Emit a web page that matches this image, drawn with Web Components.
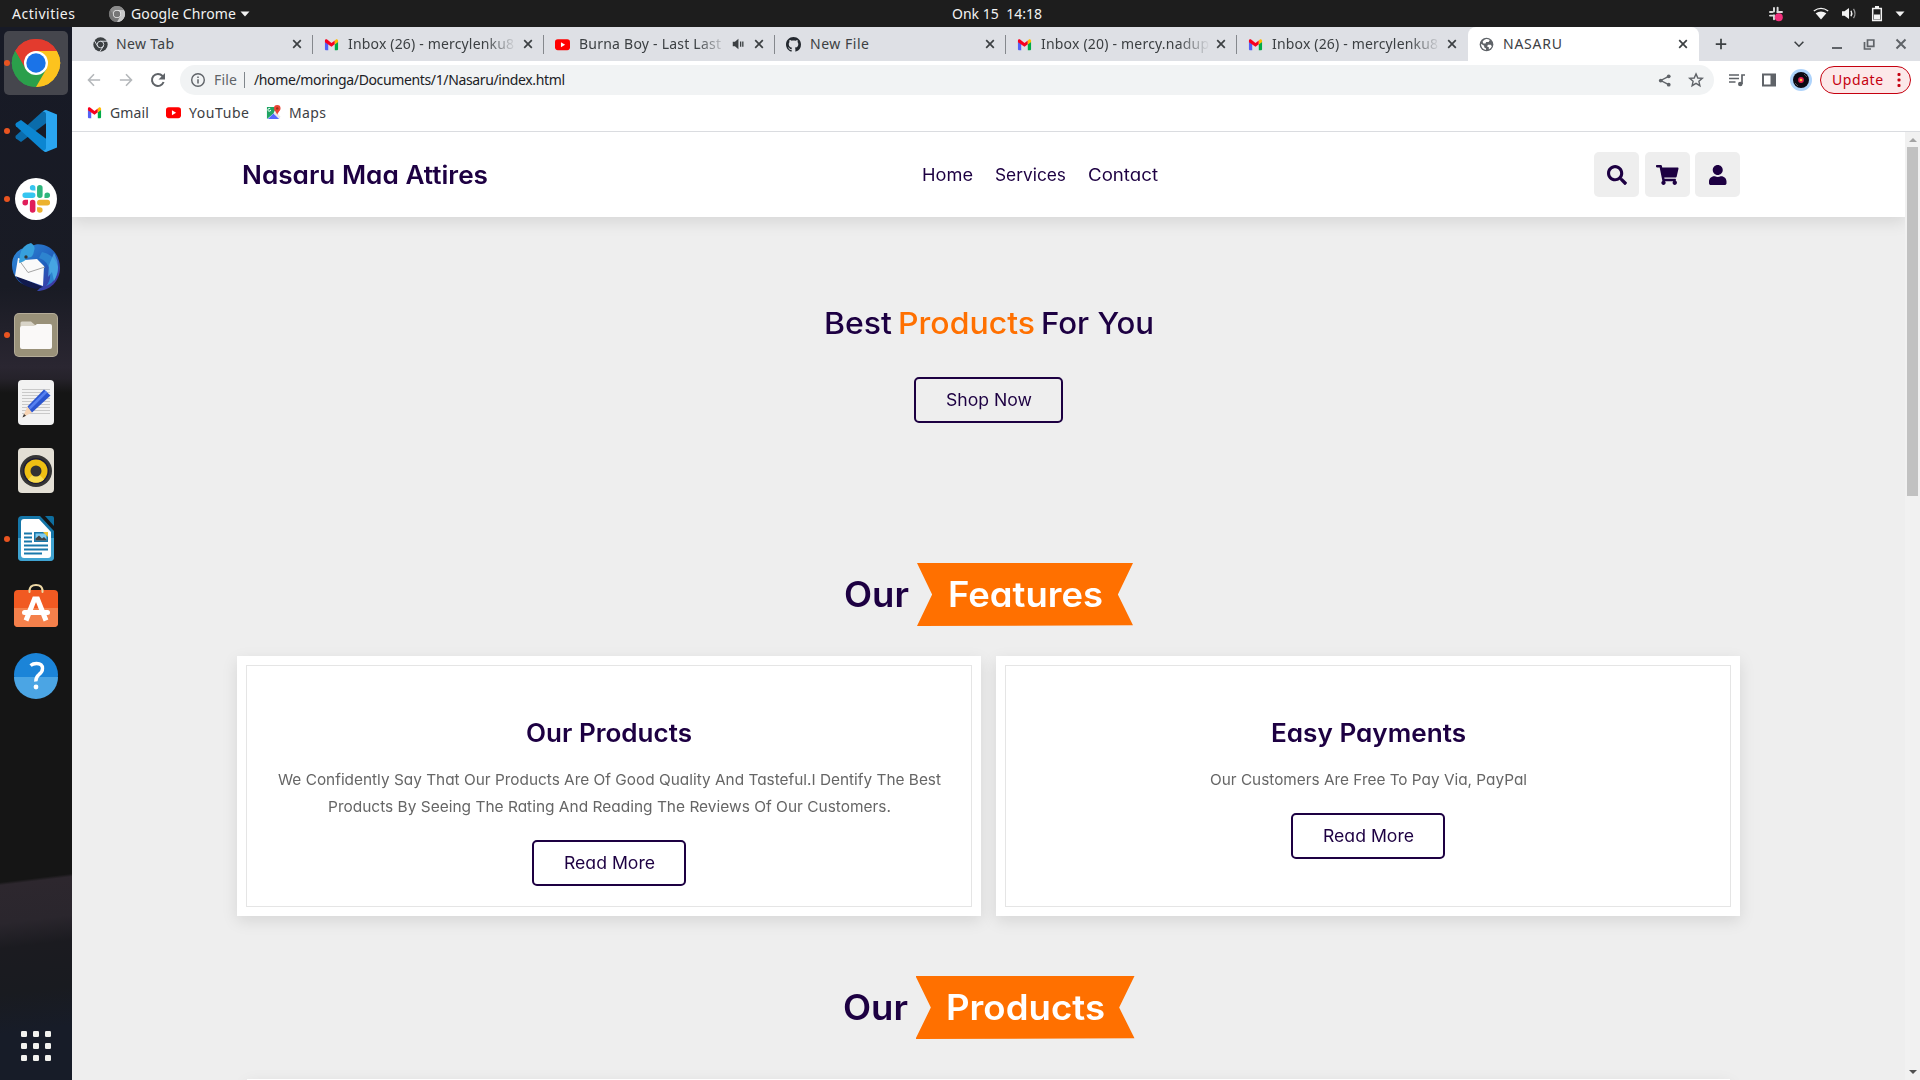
<!DOCTYPE html>
<html lang="en">
<head>
<meta charset="utf-8">
<title>NASARU</title>
<style>
html,body{margin:0;height:100%;overflow:hidden;background:#eee}
</style>
</head>
<body>
<desktop-shell></desktop-shell>
<script>
const ui = '"Noto Sans","Open Sans",sans-serif';
const fits = [];

/* Base class: renders template() into an open shadow root. */
class Base extends HTMLElement {
  constructor(){ super(); this.attachShadow({mode:'open'}); }
  connectedCallback(){
    if(this.done) return; this.done = true;
    this.shadowRoot.innerHTML = '<style>*{box-sizing:border-box}' + this.css() + '</style>' + this.html();
    this.after && this.after();
  }
  css(){ return ''; }
  html(){ return '<slot></slot>'; }
  a(n,d=''){ return this.getAttribute(n) ?? d; }
}

/* One line of text set to an exact advance width, by tracking or (with --fit: scale) by widening the glyphs. */
class FitText extends Base {
  css(){ return ':host{display:inline-block;white-space:pre;flex:none;text-align:left}span{display:inline-block;white-space:pre;transform-origin:0 50%}'; }
  html(){ return '<span><slot></slot></span>'; }
  after(){ fits.push(this); }
  fit(){
    const s = this.shadowRoot.querySelector('span'), w = +this.a('w');
    const nat = s.getBoundingClientRect().width;
    if(getComputedStyle(this).getPropertyValue('--fit').trim() === 'scale'){
      s.style.transform = `scaleX(${w / nat})`;
      s.style.marginRight = (w - nat) + 'px';
    } else {
      const ls = (w - nat) / (this.textContent.length - 1);
      s.style.letterSpacing = ls + 'px';
      s.style.marginRight = -ls + 'px';
    }
    this.style.width = w + 'px';
  }
}

const slackMark = (o='') => `<g ${o}><path fill="#36c5f0" d="M9 0a2.4 2.4 0 1 0 0 4.8h2.4V2.4A2.4 2.4 0 0 0 9 0zM9 6.4H2.6a2.4 2.4 0 0 0 0 4.8H9a2.4 2.4 0 0 0 0-4.8z"/><path fill="#2eb67d" d="M24 8.8a2.4 2.4 0 0 0-4.8 0v2.4h2.4A2.4 2.4 0 0 0 24 8.8zM17.6 8.8V2.4a2.4 2.4 0 0 0-4.8 0v6.4a2.4 2.4 0 0 0 4.8 0z"/><path fill="#ecb22e" d="M15.2 24a2.4 2.4 0 0 0 0-4.8h-2.4v2.4a2.4 2.4 0 0 0 2.4 2.4zM15.2 17.6h6.4a2.4 2.4 0 0 0 0-4.8h-6.4a2.4 2.4 0 0 0 0 4.8z"/><path fill="#e01e5a" d="M.2 15.2a2.4 2.4 0 0 0 4.8 0v-2.4H2.6a2.4 2.4 0 0 0-2.4 2.4zM6.6 15.2v6.4a2.4 2.4 0 0 0 4.8 0v-6.4a2.4 2.4 0 0 0-4.8 0z"/></g>`;
const chrome = (r,g,y,b,w) => `<path fill="${r}" d="M24 24 3.2 12A24 24 0 0 1 44.8 12z"/><path fill="${y}" d="M24 24 44.8 12A24 24 0 0 1 24 48z"/><path fill="${g}" d="M24 24 24 48A24 24 0 0 1 3.2 12z"/><path fill="${r}" d="M24 12H44.8A24 24 0 0 0 3.2 12L13.6 30z"/><path fill="${y}" d="M34.4 30 24 48A24 24 0 0 0 44.8 12H24z"/><path fill="${g}" d="M13.6 30 3.2 12A24 24 0 0 0 24 48L34.4 30z"/><circle cx="24" cy="24" r="12" fill="${w}"/><circle cx="24" cy="24" r="9.7" fill="${b}"/>`;

const icons = {
  chrome: ['48 48', chrome('#e33b2e','#2b9f4b','#fcc31e','#1a73e8','#fff')],
  chromeGrey: ['48 48', chrome('#8b8b8b','#777','#c9c9c9','#777','#eee')],
  chromeMono: ['48 48', '<circle cx="24" cy="24" r="23" fill="#3c4043"/><g fill="none" stroke="#dee1e6" stroke-width="3"><circle cx="24" cy="24" r="10.5"/><path d="M24 13.500H47M15 29.500 3.500 10M33 29.500 21 48"/></g>'],
  vscode: ['42 42', '<path fill="#0b6cab" d="M31 0 34 11 6 32 1 28.600Q-.4 27 1 25.500L27 2z"/><path fill="#0c86d1" d="M31 42 34 31 6 10 1 13Q-.4 14.700 1 16.200L27 40z"/><path fill="#2aa5ef" d="M31 0 42 4.500V37.500L31 42q-2 0-3.500-2 3.500 1 3.500-2.500V4.500Q31 1 27.500 2 29 0 31 0z"/>'],
  slack: ['42 42', '<circle cx="21" cy="21" r="21" fill="#fff"/>' + slackMark('transform="translate(7.200 7) scale(1.160)"')],
  slackTray: ['20 20', '<g stroke="#ddd" stroke-width="2.400" stroke-linecap="round"><path d="M7.500 2.500v4.500M12 2v5M2.500 7.500h3M11.500 7.500h6M2.500 12h5M7.500 11.500v5"/></g><circle cx="13.500" cy="14" r="5" fill="#f2307c"/>'],
  bird: ['48 48', '<defs><linearGradient id="g" x1="0" y1="0" x2="1" y2="1"><stop offset="0" stop-color="#2f8bd8"/><stop offset=".55" stop-color="#2160bd"/><stop offset="1" stop-color="#4b2a9b"/></linearGradient></defs><path fill="url(#g)" d="M24 1.500C36 0 48 10 48 25 48 38 38 48 25 48L29 44Q10 44 5 36 0 30 0 22 0 11 9 6z"/><path fill="#111a4d" d="M3 32 31 44 24 46Q9 44 3 32z"/><path fill="#fafafa" d="M6 15 13 17 25 16 32 23 31 43 3 33Z"/><path fill="none" stroke="#a5a5a5" d="M7 17 16 29.500 33 24"/><path fill="#37a0dc" d="M19 0Q10 2 8 12L7 20Q12 19 16 14.500 21 15 22 8 24 3 19 0z"/><path fill="#2d84cf" d="M27 15Q37 18 38 30 39 38 34 43 46 38 46 24 43 12 30 9z"/><path fill="#55b7ec" d="M42 10Q50 24 42 38L40 29 36 34 37 22z" opacity=".65"/><circle cx="14" cy="14" r="1.700" fill="#333"/>'],
  files: ['44 44', '<rect width="44" height="44" rx="5" fill="#b5ad99"/><rect x="1" y="1" width="42" height="42" rx="4" fill="#999179"/><path fill="#d8d4c8" d="M6.500 10q0-1.500 1.500-1.500h9l4 3.500v5H6.500z"/><path fill="#faf9f8" d="M6 15q0-2 2-2h12l3-2h13q2 0 2 2v21q0 2-2 2H8q-2 0-2-2z"/>'],
  editor: ['36 45', '<rect width="36" height="45" rx="4" fill="#f2f2f2"/><path stroke="#c9c9c9" d="M4 9.500h28M4 12.500h28M4 15.500h28M4 18.500h28M4 21.500h28M4 24.500h28M4 27.500h28M4 30.500h28M4 33.500h28"/><path fill="#f6d3b3" d="M9.500 26.500 14 32.500 4.500 37.500z"/><path fill="#333" d="M6 34 8 35.700 4.500 37.500z"/><path fill="#2b55cf" d="M9.500 26.500 26 9.500 32.500 15.500 14 32.500z"/><path stroke="#5580f0" stroke-width="2.500" d="M11.500 28.500 28.500 11.500"/>'],
  rhythm: ['36 45', '<rect width="36" height="45" rx="4" fill="#e3dfd5"/><circle cx="18" cy="23" r="16" fill="#353535"/><circle cx="18" cy="23" r="13" fill="#1c1c36"/><circle cx="18" cy="23" r="11.500" fill="#eebf13"/><path fill="#f8dc50" d="M18 23 10 31.500A11.500 11.500 0 0 0 26 31.500z"/><circle cx="18" cy="23" r="5.500" fill="#333"/>'],
  writer: ['36 45', '<path fill="#1576a8" d="M4 0H22L36 15V41q0 4-4 4H4q-4 0-4-4V4Q0 0 4 0z"/><path fill="#3fa3d1" d="M0 22H36V41q0 4-4 4H4q-4 0-4-4z"/><path fill="#0e6e9f" d="M27 0H34q2 0 2 2V10z"/><path fill="#fff" d="M6 3H21L33 16V39q0 3-3 3H6q-3 0-3-3V6q0-3 3-3z"/><path stroke="#1978ab" stroke-width="2" d="M6 17.500h8M6 21.500h8M6 25.500h8M6 29.500h24M6 33.500h24M6 37.500h18"/><path fill="#1978ab" d="M16 16h14v10H16z"/><path fill="#7fcaf0" d="M17.500 17.500h11v7h-11z"/><path fill="#444" d="M17.500 24.500v-2l3.500-3 3 3 2-1.500 2.500 2.500v1z"/><path fill="#ecc331" d="M25 16h5v5z"/>'],
  software: ['44 44', '<path fill="none" stroke="#eed9a6" stroke-width="2" d="M15.500 10V8q0-6 6.500-6t6.500 6v2"/><path fill="#f15a22" d="M0 11q0-4 4-4H40q4 0 4 4V40q0 4-4 4H4q-4 0-4-4z"/><path fill="#f4804b" d="M0 25H44V40q0 4-4 4H4q-4 0-4-4z"/><path fill="none" stroke="#fff" stroke-width="5" d="M12 37.500 20.500 16h3L32 37.500"/><rect x="8" y="27" width="28" height="5" rx="2.500" fill="#fff"/><path stroke="#eed9a6" stroke-width="2" stroke-linecap="round" d="M15.500 7v2M28.500 7v2"/>'],
  help: ['44 44', '<circle cx="22" cy="22" r="22" fill="#1b84d8"/><path fill="#4ba5e4" d="M0 24H44A22 22 0 0 1 0 24z"/><path fill="none" stroke="#fff" stroke-width="3.400" d="M16.500 12.500Q19 10.500 22.500 10.500 28.500 10.500 28.500 15.500 28.500 19 25 21.500 21.500 24.500 21.800 28.500"/><circle cx="22" cy="34" r="2.400" fill="#fff"/>'],
  grid: ['30 30', '<g fill="#f2f2ee">' + [0,12,24].map(y=>[0,12,24].map(x=>`<rect x="${x}" y="${y}" width="6" height="6" rx="1.300"/>`).join('')).join('') + '</g>'],
  gmail: ['16 16', '<path fill="#5462f5" d="M1 5 4.500 7.500V14H2q-1 0-1-1z"/><path fill="#00ac47" d="M15 5 11.500 7.500V14H14q1 0 1-1z"/><path fill="#f8001f" d="M1 4.500V3.500Q1.300 1.800 3 2.500L8 6.300 11.500 3.600V7.800L8 10.500 1 5.500z"/><path fill="#ffba00" d="M11.500 3.600 13 2.500Q15 2 15 4V5.300L11.500 7.900z"/>'],
  youtube: ['16 16', '<rect y="2.500" width="16" height="11.500" rx="3" fill="#f00"/><path fill="#fff" d="M6.300 5.600 10.800 8.200 6.300 10.900z"/>'],
  maps: ['16 16', '<path fill="#1fa463" d="M1 2h10L8 9 1 15z"/><path fill="#5468ff" d="M2 15 8 9l6 6z"/><path fill="#e8e8e8" d="M8 9l2.500-2L15 12v3z"/><path fill="#ea4335" d="M12 0a3.500 3.500 0 0 0-3.500 3.600C8.500 6 11 7 12 10.500 13 7 15.500 6 15.500 3.600A3.500 3.500 0 0 0 12 0z"/><circle cx="12" cy="3.600" r="1.300" fill="#931"/><path fill="none" stroke="#fff" d="M5 5.300a1.500 1.500 0 1 1-.5-1.300"/>'],
  github: ['16 16', '<path fill="#24292f" d="M8 0C3.580 0 0 3.580 0 8c0 3.540 2.290 6.530 5.470 7.590.4.070.55-.170.55-.380 0-.190-.010-.820-.010-1.490-2.010.370-2.530-.490-2.690-.940-.090-.230-.480-.940-.820-1.130-.280-.150-.680-.520-.010-.530.630-.010 1.080.580 1.230.820.720 1.210 1.870.870 2.330.660.070-.520.280-.870.510-1.070-1.780-.200-3.640-.890-3.640-3.950 0-.870.310-1.590.820-2.150-.080-.200-.360-1.020.080-2.120 0 0 .670-.210 2.200.820.640-.180 1.320-.270 2-.270s1.360.090 2 .270c1.530-1.040 2.200-.820 2.200-.820.440 1.100.160 1.920.080 2.120.510.560.820 1.270.820 2.150 0 3.070-1.870 3.750-3.650 3.950.290.250.540.730.540 1.480 0 1.070-.010 1.930-.010 2.200 0 .210.150.460.550.380A8.010 8.010 0 0 0 16 8c0-4.420-3.580-8-8-8z"/>'],
  globe: ['16 16', '<circle cx="8" cy="8" r="7.300" fill="#5f6368"/><path fill="#fff" d="M7.500 2.200Q9.500 2 11.500 3.200L10.300 5.300H7.600L7 7H4.600L3.800 5Q5 2.800 7.500 2.200zM2.100 7.300 5.500 9.300V11L7.500 12.300V13.900Q2.200 13 2.100 7.300zM9.500 8.300h3l1.200 1.500Q13 12 10.500 13.300V11L8.600 10z"/>'],
  speaker: ['16 16', '<path fill="#3c4043" d="M2 5.500h2.500L8.500 2v12L4.500 10.500H2z"/><path stroke="#3c4043" stroke-width="1.500" d="M11 5v6M13.500 5v6" />'],
  close: ['16 16', '<path fill="none" stroke="#3c4043" stroke-width="1.700" d="M4.200 4.200l7.600 7.600m0-7.600-7.600 7.600"/>'],
  plus: ['16 16', '<path stroke="#3c4043" stroke-width="2" d="M8 2v12M2 8h12"/>'],
  chevron: ['16 16', '<path fill="none" stroke="#3c4043" stroke-width="1.800" d="M3 5.500l5 5 5-5"/>'],
  minimize: ['16 16', '<path stroke="#5f6368" stroke-width="2" d="M3 12h10"/>'],
  restore: ['16 16', '<path fill="none" stroke="#5f6368" stroke-width="1.700" d="M6.500 4h6.300v6.300H6.500zM3.500 6v7H10"/>'],
  winclose: ['16 16', '<path fill="none" stroke="#5f6368" stroke-width="2" d="M3.500 3.500l9 9m0-9-9 9"/>'],
  back: ['16 16', '<path fill="none" stroke="#b4b7ba" stroke-width="1.800" d="M15 8H2M8 1.500 1.700 8 8 14.500"/>'],
  forward: ['16 16', '<path fill="none" stroke="#b4b7ba" stroke-width="1.800" d="M1 8h13M8 1.500 14.300 8 8 14.500"/>'],
  reload: ['16 16', '<path fill="none" stroke="#5f6368" stroke-width="2" d="M13.600 10A6 6 0 1 1 12.500 4L14 5.500"/><path fill="#5f6368" d="M15 1v6.500H8.500z"/>'],
  info: ['16 16', '<circle cx="8" cy="8" r="6.300" fill="none" stroke="#5f6368" stroke-width="1.400"/><path stroke="#5f6368" stroke-width="1.500" d="M8 7.200v4.300M8 4.500v1.500"/>'],
  share: ['16 16', '<path fill="none" stroke="#5f6368" stroke-width="1.500" d="M12.500 3.500 4 8l8.500 4.500"/><g fill="#5f6368"><circle cx="12.500" cy="3.500" r="2"/><circle cx="4" cy="8" r="2"/><circle cx="12.500" cy="12.500" r="2"/></g>'],
  star: ['16 16', '<path fill="none" stroke="#5f6368" stroke-width="1.400" d="M8 1.900l1.800 4.100 4.500.4-3.400 2.900 1 4.400L8 11.400l-3.900 2.300 1-4.400L1.700 6.400l4.500-.4z"/>'],
  playlist: ['16 16', '<path fill="none" stroke="#5f6368" stroke-width="1.700" d="M0 3h10M0 6.500h10M0 10h6.500M16 3h-3v9"/><circle cx="11.300" cy="12" r="2.300" fill="#5f6368"/>'],
  panel: ['16 16', '<path fill="none" stroke="#5f6368" stroke-width="2" d="M2 2.500h12v11H2z"/><path fill="#5f6368" d="M9.500 2h5v12h-5z"/>'],
  avatar: ['22 22', '<circle cx="11" cy="11" r="11" fill="#aed3fb"/><circle cx="11" cy="11" r="8" fill="#0b0812"/><circle cx="11" cy="11" r="2.900" fill="#e01f52"/><circle cx="11" cy="11" r="1.300" fill="#ffc83c"/><path stroke="#666" stroke-width=".8" d="M5 14l3 3M14 5l3 3"/>'],
  dots: ['4 16', '<g fill="#c5000f"><rect x=".5" y="1" width="3" height="3" rx="1"/><rect x=".5" y="6.500" width="3" height="3" rx="1"/><rect x=".5" y="12" width="3" height="3" rx="1"/></g>'],
  down: ['10 6', '<path fill="#f2f2f2" d="M.5.500h9L5 5.500z"/>'],
  wifi: ['16 14', '<path fill="#f2f2f2" d="M8 13.500 2.600 6.600Q8 3 13.400 6.600z"/><path fill="none" stroke="#f2f2f2" stroke-width="1.300" d="M.8 4.200Q8-1.300 15.200 4.200"/>'],
  volume: ['16 14', '<path fill="#f2f2f2" d="M1 4.500h2.500L8 1v12L3.500 9.500H1z"/><path fill="none" stroke="#f2f2f2" stroke-width="1.400" d="M10 4q1.600 3 0 6"/><path fill="none" stroke="#999" stroke-width="1.300" d="M12.500 2q3 5 0 10"/>'],
  battery: ['12 16', '<path fill="none" stroke="#f2f2f2" stroke-width="1.500" d="M1.700 2.500h8.600v12H1.700z"/><path fill="#f2f2f2" d="M4 0h4v2.500H4zM3 8.500h6v5H3z"/>'],
  search: ['512 512', '<path d="M505 442.700L405.300 343c-4.500-4.500-10.600-7-17-7H372c27.600-35.300 44-79.700 44-128C416 93.100 322.900 0 208 0S0 93.100 0 208s93.100 208 208 208c48.300 0 92.700-16.400 128-44v16.300c0 6.400 2.500 12.500 7 17l99.700 99.700c9.400 9.400 24.600 9.400 33.900 0l28.300-28.300c9.400-9.400 9.400-24.600.1-34zM208 336c-70.700 0-128-57.200-128-128 0-70.700 57.200-128 128-128 70.700 0 128 57.200 128 128 0 70.700-57.200 128-128 128z"/>'],
  cart: ['576 512', '<path d="M528.120 301.319l47.273-208C578.806 78.301 567.391 64 551.990 64H159.208l-9.166-44.810C147.758 8.021 137.930 0 126.529 0H24C10.745 0 0 10.745 0 24v16c0 13.255 10.745 24 24 24h69.883l70.248 343.435C147.325 417.100 136 435.222 136 456c0 30.928 25.072 56 56 56s56-25.072 56-56c0-15.674-6.447-29.835-16.824-40h209.647C430.447 426.165 424 440.326 424 456c0 30.928 25.072 56 56 56s56-25.072 56-56c0-22.172-12.888-41.332-31.579-50.405l5.517-24.276c3.413-15.018-8.002-29.319-23.403-29.319H218.117l-6.545-32h293.145c11.206 0 20.920-7.754 23.403-18.681z"/>'],
  user: ['448 512', '<path d="M224 256c70.700 0 128-57.300 128-128S294.700 0 224 0 96 57.300 96 128s57.300 128 128 128zm89.600 32h-16.700c-22.200 10.200-46.900 16-72.900 16s-50.600-5.800-72.900-16h-16.700C60.200 288 0 348.200 0 422.400V464c0 26.500 21.500 48 48 48h352c26.500 0 48-21.500 48-48v-41.600c0-74.200-60.200-134.400-134.400-134.400z"/>'],
  up: ['8 4', '<path fill="#a3a3a3" d="M0 4 4 0l4 4z"/>'],
  dn: ['8 4', '<path fill="#505050" d="M0 0h8L4 4z"/>']
};

/* Inline SVG icon: name, width and height in pixels. */
class UiIcon extends Base {
  css(){ return `:host{display:block;flex:none;width:${this.a('w','16')}px;height:${this.a('h',this.a('w','16'))}px}svg{display:block;width:100%;height:100%;overflow:visible}`; }
  html(){ const [vb,body] = icons[this.a('name')]; return `<svg viewBox="0 0 ${vb}" preserveAspectRatio="none" fill="currentColor">${body}</svg>`; }
}

class TopBar extends Base {
  css(){ return `:host{display:flex;align-items:center;height:27px;background:#1d1d1d;color:#f2f2f2;font:14px/26px ${ui};padding-left:12px}
    .app{margin-left:34px;margin-right:6px}.clock{margin-left:702px}.s{margin-left:726px}`; }
  html(){ return `<fit-text w="63">Activities</fit-text><ui-icon class="app" name="chromeGrey" w="16"></ui-icon><fit-text w="105">Google Chrome</fit-text>
    <ui-icon name="down" w="10" h="6" style="margin-left:4px"></ui-icon><fit-text class="clock" w="90">Onk 15  14:18</fit-text>
    <ui-icon class="s" name="slackTray" w="16"></ui-icon><ui-icon name="wifi" w="16" h="13" style="margin-left:29px"></ui-icon>
    <ui-icon name="volume" w="16" h="13" style="margin-left:12px"></ui-icon><ui-icon name="battery" w="12" h="16" style="margin-left:14px"></ui-icon>
    <ui-icon name="down" w="10" h="6" style="margin-left:12px"></ui-icon>`; }
}

class DockItem extends Base {
  css(){ return `:host{display:grid;grid-template-columns:4px 64px 4px;height:68px;align-items:center;position:relative}
    .b{grid-column:2;height:64px;display:grid;place-items:center;border-radius:5px}
    ui-icon{margin-bottom:${this.a('lift','0')}px}
    :host([active]) .b{background:#45464d}
    :host([running])::before{content:"";position:absolute;left:4px;top:31px;width:6px;height:6px;border-radius:50%;background:#e95420}`; }
  html(){ return `<div class="b"><ui-icon name="${this.a('icon')}" w="${this.a('w')}" h="${this.a('h',this.a('w'))}"></ui-icon></div>`; }
}

class SideDock extends Base {
  css(){ return `:host{display:flex;flex-direction:column;width:72px;flex:none;padding:2px 0 19px;
    background:linear-gradient(173deg,transparent 0 849px,#2d272e 852px,#2a262d 890px,#1b1b20 915px,#191b20 960px,#171c28 1000px),linear-gradient(#171a26 0,#191b24 260px,#2a2631 340px,#25222a 352px,#151515 366px,#151515 100%)}
    .grid{margin-top:auto;align-self:center}`; }
  html(){ return `<dock-item icon="chrome" w="48" active running></dock-item><dock-item icon="vscode" w="42" running></dock-item>
    <dock-item icon="slack" w="42" running></dock-item><dock-item icon="bird" w="48"></dock-item><dock-item icon="files" w="44" running></dock-item>
    <dock-item icon="editor" w="36" h="45" lift="1"></dock-item><dock-item icon="rhythm" w="36" h="45" lift="1"></dock-item><dock-item icon="writer" w="36" h="45" lift="1" running></dock-item>
    <dock-item icon="software" w="44" lift="5"></dock-item><dock-item icon="help" w="44" lift="1"></dock-item><ui-icon class="grid" name="grid" w="30"></ui-icon>`; }
}

class BrowserTab extends Base {
  css(){ return `:host{display:flex;align-items:center;width:231px;height:34px;padding:0 8px 0 11px;position:relative;color:#3c4043}
    :host(:not([active]):not([last]))::after{content:"";position:absolute;right:0;top:8px;width:1px;height:19px;background:#85888d}
    :host([active]){background:#fff;border-radius:8px 8px 0 0}
    .t{flex:1;min-width:0;margin:0 3px 0 9px;overflow:hidden;height:24px;line-height:24px}
    :host([fade]) .t{-webkit-mask:linear-gradient(90deg,#000 calc(100% - 32px),transparent)}
    :host(:first-of-type) .t{margin-left:8px}
    .sp{margin-right:6px}`; }
  html(){ return `<ui-icon name="${this.a('icon')}" w="15"></ui-icon><div class="t"><fit-text w="${this.a('w')}">${this.a('label')}</fit-text></div>
    ${this.hasAttribute('sound') ? '<ui-icon class="sp" name="speaker" w="14"></ui-icon>' : ''}<ui-icon name="close" w="16"></ui-icon>`; }
}

class TabStrip extends Base {
  css(){ return `:host{display:flex;height:34px;background:#dee0e5;padding-left:82px;margin-left:-72px;font:14px/24px ${ui}}
    .r{display:flex;align-items:center;color:#3c4043}`; }
  html(){ return `<browser-tab icon="chromeMono" w="58" label="New Tab"></browser-tab>
    <browser-tab icon="gmail" w="166" label="Inbox (26) - mercylenku8" fade></browser-tab>
    <browser-tab icon="youtube" w="142" label="Burna Boy - Last Last" fade sound></browser-tab>
    <browser-tab icon="github" w="59" label="New File"></browser-tab>
    <browser-tab icon="gmail" w="168" label="Inbox (20) - mercy.nadup" fade></browser-tab>
    <browser-tab icon="gmail" w="166" label="Inbox (26) - mercylenku8" fade last></browser-tab>
    <browser-tab icon="globe" w="59" label="NASARU" active></browser-tab>
    <div class="r"><ui-icon name="plus" w="14" style="margin-left:15px"></ui-icon><ui-icon name="chevron" w="14" style="margin-left:64px"></ui-icon>
    <ui-icon name="minimize" w="16" style="margin-left:23px"></ui-icon><ui-icon name="restore" w="16" style="margin-left:16px"></ui-icon><ui-icon name="winclose" w="16" style="margin-left:16px"></ui-icon></div>`; }
}

class ToolBar extends Base {
  css(){ return `:host{display:flex;align-items:center;height:38px;background:#fff;padding:0 9px 0 15px;font:14px/24px ${ui};color:#202124}
    .omni{display:flex;align-items:center;height:30px;border-radius:15px;background:#f1f3f4;width:1535px;margin-left:14px;padding:0 10px}
    .file{color:#5f6368;margin-left:8px}.bar{width:1px;height:16px;background:#80868b;margin:0 9px 0 7px}
    .up{display:flex;align-items:center;height:28px;width:91px;border:1px solid #c5000f;border-radius:14px;background:#fce8e9;color:#c5000f;padding:0 9px 0 11px;justify-content:space-between;margin-left:8px}`; }
  html(){ return `<ui-icon name="back" w="14"></ui-icon><ui-icon name="forward" w="14" style="margin-left:18px"></ui-icon><ui-icon name="reload" w="16" style="margin-left:17px"></ui-icon>
    <div class="omni"><ui-icon name="info" w="16"></ui-icon><fit-text class="file" w="23">File</fit-text><div class="bar"></div><fit-text w="311">/home/moringa/Documents/1/Nasaru/index.html</fit-text>
    <ui-icon name="share" w="15" style="margin-left:auto;margin-right:16px"></ui-icon><ui-icon name="star" w="16"></ui-icon></div>
    <ui-icon name="playlist" w="16" style="margin-left:15px"></ui-icon><ui-icon name="panel" w="16" style="margin-left:16px"></ui-icon><ui-icon name="avatar" w="22" style="margin-left:13px"></ui-icon>
    <div class="up"><fit-text w="51">Update</fit-text><ui-icon name="dots" w="4" h="16"></ui-icon></div>`; }
}

class BookmarksBar extends Base {
  css(){ return `:host{display:flex;align-items:center;height:33px;background:#fff;border-bottom:1px solid #dadce0;padding:0 0 5px 15px;font:14px/24px ${ui};color:#3c4043;height:33px}
    fit-text{margin:0 17px 0 8px}`; }
  html(){ return `<ui-icon name="gmail" w="15"></ui-icon><fit-text w="39">Gmail</fit-text><ui-icon name="youtube" w="15"></ui-icon><fit-text w="60">YouTube</fit-text><ui-icon name="maps" w="15"></ui-icon><fit-text w="37">Maps</fit-text>`; }
}

class SiteHeader extends Base {
  css(){ return `:host{display:flex;align-items:center;justify-content:space-between;height:85px;background:#fff;padding:0 165px 0 170px;box-shadow:0 5px 15px rgba(0,0,0,.1);position:relative;z-index:1}
    .logo{font-size:25px;font-weight:600}nav{display:flex;gap:22px;font-size:17px;margin-left:-3px}
    .i{display:flex;gap:5.500px}.i div{width:45px;height:45px;border-radius:5px;background:#eee;display:grid;place-items:center}`; }
  html(){ return `<fit-text class="logo" w="246">Nasaru Maa Attires</fit-text>
    <nav><fit-text w="51">Home</fit-text><fit-text w="71">Services</fit-text><fit-text w="70">Contact</fit-text></nav>
    <div class="i"><div><ui-icon name="search" w="20"></ui-icon></div><div><ui-icon name="cart" w="22.500" h="20"></ui-icon></div><div><ui-icon name="user" w="17.500" h="20"></ui-icon></div></div>`; }
}

class SiteButton extends Base {
  css(){ return `:host{display:flex;align-items:center;justify-content:center;width:${this.a('w')}px;height:46px;border:2px solid #1d0042;border-radius:5px;font-size:17px;line-height:24px;box-sizing:border-box}`; }
  html(){ return `<fit-text w="${this.a('t')}">${this.a('label')}</fit-text>`; }
}

class HeroBanner extends Base {
  css(){ return `:host{display:flex;flex-direction:column;align-items:center;height:346px;padding-top:84px}
    h3{margin:0 0 31px;font-size:30px;font-weight:550;line-height:45px;height:45px;display:flex;gap:6px}.o{color:#ff7000}`; }
  html(){ return `<h3><fit-text w="68">Best</fit-text><fit-text class="o" w="137">Products</fit-text><fit-text w="113">For You</fit-text></h3><site-button w="149" t="86" label="Shop Now"></site-button>`; }
}

class RibbonHeading extends Base {
  css(){ return `:host{display:flex;justify-content:center;align-items:center;height:63px;gap:8px;font-size:35px;font-weight:600;line-height:45px}
    .r{display:flex;align-items:center;justify-content:center;height:63px;width:${this.a('rw')}px;background:#ff7000;color:#fff;clip-path:polygon(100% 0,93% 50%,100% 99%,0 100%,7% 50%,0 0)}`; }
  html(){ return `<fit-text w="65">Our</fit-text><div class="r"><fit-text w="${this.a('tw')}">${this.a('label')}</fit-text></div>`; }
}

class FeatureCard extends Base {
  css(){ return `:host{display:flex;flex-direction:column;align-items:center;flex:1;height:260px;background:#fff;outline:1px solid rgba(0,0,0,.1);outline-offset:-10px;box-shadow:0 5px 15px rgba(0,0,0,.1);padding-top:59px}
    h3{margin:0 0 14px;font-size:25px;font-weight:600;line-height:37px}
    .p{display:flex;flex-direction:column;align-items:center;font-size:15px;line-height:27px;color:#666;margin-bottom:20px}`; }
  html(){ return `<h3><fit-text w="${this.a('tw')}">${this.a('label')}</fit-text></h3><div class="p"><slot></slot></div><site-button w="154" t="91" label="Read More"></site-button>`; }
}

class ScrollBar extends Base {
  css(){ return `:host{display:flex;flex-direction:column;align-items:center;width:15px;flex:none;background:#f1f1f1}
    .u{margin:6px 0 5px}.th{width:11px;height:349px;background:#c1c1c1}.d{margin:auto 0 6px}`; }
  html(){ return `<ui-icon class="u" name="up" w="8" h="4"></ui-icon><div class="th"></div><ui-icon class="d" name="dn" w="8" h="4"></ui-icon>`; }
}

class SitePage extends Base {
  css(){ return `:host{--fit:scale;display:block;width:1833px;height:948px;overflow:hidden;background:#eee;color:#1d0042;font-family:Inter,sans-serif;font-feature-settings:"cv11"}
    .row{display:flex;gap:15px;padding:0 165px;margin:30px 0 60px}
    .swipe{margin:30px 165px 0;padding:10px;overflow:hidden;height:40px}.swipe div{height:60px;background:#fff;box-shadow:0 5px 15px rgba(0,0,0,.1)}`; }
  html(){ return `<site-header></site-header><hero-banner></hero-banner><ribbon-heading label="Features" rw="216" tw="155"></ribbon-heading>
    <div class="row"><feature-card label="Our Products" tw="166"><fit-text w="663">We Confidently Say That Our Products Are Of Good Quality And Tasteful.I Dentify The Best</fit-text><fit-text w="563">Products By Seeing The Rating And Reading The Reviews Of Our Customers.</fit-text></feature-card>
    <feature-card label="Easy Payments" tw="195"><fit-text w="317">Our Customers Are Free To Pay Via, PayPal</fit-text></feature-card></div>
    <ribbon-heading label="Products" rw="219" tw="159"></ribbon-heading><div class="swipe"><div></div></div>`; }
}

class DesktopShell extends Base {
  css(){ return `:host{display:flex;flex-direction:column;width:1920px;height:1080px;overflow:hidden}
    .m{display:flex;flex:1;min-height:0}.w{display:flex;flex-direction:column;width:1848px}side-dock{position:relative;z-index:1}.v{display:flex;flex:1;min-height:0}`; }
  html(){ return `<top-bar></top-bar><div class="m"><side-dock></side-dock><div class="w"><tab-strip></tab-strip><tool-bar></tool-bar><bookmarks-bar></bookmarks-bar><div class="v"><site-page></site-page><scroll-bar></scroll-bar></div></div></div>`; }
}

Object.entries({'fit-text':FitText,'ui-icon':UiIcon,'top-bar':TopBar,'dock-item':DockItem,'side-dock':SideDock,'browser-tab':BrowserTab,'tab-strip':TabStrip,'tool-bar':ToolBar,'bookmarks-bar':BookmarksBar,'site-header':SiteHeader,'site-button':SiteButton,'hero-banner':HeroBanner,'ribbon-heading':RibbonHeading,'feature-card':FeatureCard,'scroll-bar':ScrollBar,'site-page':SitePage,'desktop-shell':DesktopShell}).forEach(([n,c])=>customElements.define(n,c));
fits.forEach(f=>f.fit());
</script>
</body>
</html>
